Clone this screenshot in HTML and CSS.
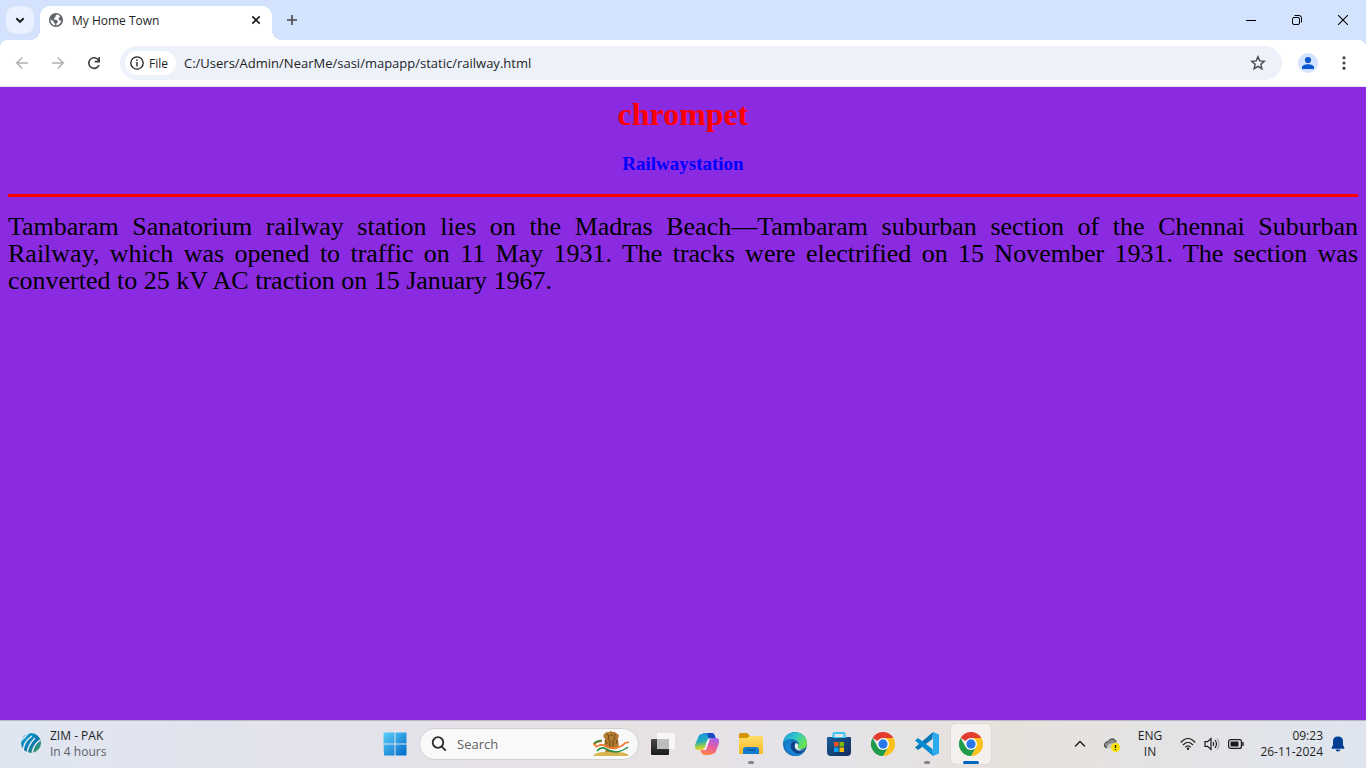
FILE: index.html
```html
<!DOCTYPE html>
<html lang="en">
<head>
<meta charset="utf-8">
<title>My Home Town</title>
<link rel="stylesheet" href="styles.css">
</head>
<body>
<header class="tabstrip">
  <button class="tab-search" aria-label="Search tabs"><svg width="12" height="12" viewBox="0 0 12 12"><path d="M2.3 4.2 6 7.8l3.700-3.600" fill="none" stroke="#1f1f1f" stroke-width="1.900"/></svg></button>
  <div class="tab">
    <svg width="14" height="14" viewBox="0 0 14 14"><circle cx="7" cy="7" r="7" fill="#5f6368"/><path d="M8.500 1.600C6.800 2.200 6.200 3 6.500 4.200L4.800 5.200 5.200 6.600 8.300 7.200 8.900 9 7.600 10.300 7.200 12.500C9.800 12.300 12 10.200 12.400 8L10.500 7.200 9.300 5.600 10.600 4.600 11 3.100C10.300 2.300 9.300 1.800 8.500 1.600ZM1.600 6.300 4.600 8.300 5 10 6.200 10.800 6.100 12.500C3.300 12.200 1.300 9.700 1.600 6.300Z" fill="#fff"/></svg>
    <span class="tab-title">My Home Town</span>
    <button class="tab-close" aria-label="Close tab"><svg width="10" height="10" viewBox="0 0 10 10"><path d="m1.300 1.300 7.400 7.400m0-7.400L1.300 8.700" stroke="#1f1f1f" stroke-width="1.700"/></svg></button>
  </div>
  <button class="new-tab" aria-label="New tab"><svg width="12" height="12" viewBox="0 0 12 12"><path d="M6 1v10M1 6h10" stroke="#474747" stroke-width="1.600"/></svg></button>
  <div class="window-controls">
    <button aria-label="Minimize"><svg width="10" height="10" viewBox="0 0 10 10"><path d="M0 5.500h10" stroke="#000"/></svg></button>
    <button aria-label="Restore"><svg width="10" height="10" viewBox="0 0 10 10" fill="none" stroke="#000"><rect x=".5" y="2.500" width="7" height="7" rx="1.500"/><path d="M2.500.5H7A2.500 2.500 0 0 1 9.500 3v4.500"/></svg></button>
    <button aria-label="Close"><svg width="10" height="10" viewBox="0 0 10 10"><path d="m0 0 10 10m0-10L0 10" stroke="#000" stroke-width="1.100"/></svg></button>
  </div>
</header>
<nav class="toolbar">
  <button class="tool" aria-label="Back" disabled><svg width="14" height="14" viewBox="0 0 14 14" fill="none" stroke="#b0b0b0" stroke-width="1.500"><path d="M13 7H2M7.200 1.500 1.700 7l5.500 5.500"/></svg></button>
  <button class="tool" aria-label="Forward" disabled><svg width="14" height="14" viewBox="0 0 14 14" fill="none" stroke="#b0b0b0" stroke-width="1.500"><path d="M1 7h11M6.800 1.500 12.300 7l-5.500 5.500"/></svg></button>
  <button class="tool" aria-label="Reload"><svg width="14" height="14" viewBox="0 0 14 14" fill="none" stroke="#3c3c3c" stroke-width="1.600"><path d="M12 9A5.300 5.300 0 1 1 11.600 4.300l.6.900M12.200 1v4.600H7.700"/></svg></button>
  <div class="omnibox">
    <button class="file-chip"><svg width="14" height="14" viewBox="0 0 14 14"><circle cx="7" cy="7" r="6.200" fill="none" stroke="#1f1f1f" stroke-width="1.300"/><path d="M7 6v4.500M7 3.500v1.400" stroke="#1f1f1f" stroke-width="1.400"/></svg>File</button>
    <input class="url" type="text" aria-label="Address" value="C:/Users/Admin/NearMe/sasi/mapapp/static/railway.html">
    <button class="star" aria-label="Bookmark"><svg width="16" height="16" viewBox="0 0 16 16"><path d="m8 1.700 1.800 4.200 4.600.4-3.500 3 1 4.500L8 11.400l-3.900 2.400 1-4.500-3.500-3 4.600-.4Z" fill="none" stroke="#474747" stroke-width="1.400"/></svg></button>
  </div>
  <button class="tool profile" aria-label="Profile"><svg width="20" height="20" viewBox="0 0 20 20"><circle cx="10" cy="10" r="10" fill="#d3e3fd"/><circle cx="10" cy="7" r="3.100" fill="#0b57d0"/><path d="M4 16v-1.500C4 12.400 7 11.300 10 11.300s6 1.100 6 3.200V16Z" fill="#0b57d0"/></svg></button>
  <button class="tool menu" aria-label="Menu"><svg width="4" height="16" viewBox="0 0 4 16" fill="#474747"><circle cx="2" cy="2.800" r="1.600"/><circle cx="2" cy="8" r="1.600"/><circle cx="2" cy="13.200" r="1.600"/></svg></button>
</nav>
<main class="page">
  <h1>chrompet</h1>
  <h3>Railwaystation</h3>
  <hr>
  <p>Tambaram Sanatorium railway station lies on the Madras Beach—Tambaram suburban section of the Chennai Suburban Railway,&nbsp;which was opened to traffic on 11 May 1931. The tracks were electrified on 15 November 1931. The section was converted&nbsp;to 25 kV AC traction on 15 January 1967.</p>
</main>
<svg class="defs" width="0" height="0" aria-hidden="true">
  <defs>
    <linearGradient id="win" x2="1" y2="1"><stop stop-color="#5ad2fb"/><stop offset="1" stop-color="#0067c8"/></linearGradient>
    <linearGradient id="globe" x2="1" y2="1"><stop stop-color="#18a9d5"/><stop offset=".55" stop-color="#0878b1"/><stop offset="1" stop-color="#56a944"/></linearGradient>
    <linearGradient id="copA" x1=".2" x2=".4" y2="1"><stop stop-color="#188fe8"/><stop offset=".5" stop-color="#25b0b8"/><stop offset=".8" stop-color="#a9cf3d"/><stop offset="1" stop-color="#ffd02b"/></linearGradient>
    <linearGradient id="copB" x1=".6" x2=".3" y2="1"><stop stop-color="#a861e8"/><stop offset=".5" stop-color="#e85b9e"/><stop offset="1" stop-color="#ff8743"/></linearGradient>
    <linearGradient id="fold" x2="0" y2="1"><stop stop-color="#ffdc67"/><stop offset="1" stop-color="#f7b927"/></linearGradient>
    <linearGradient id="edgeA" x1="0" x2="1" y2=".5"><stop stop-color="#189edb"/><stop offset=".5" stop-color="#32c5cc"/><stop offset="1" stop-color="#67e34f"/></linearGradient>
    <linearGradient id="edgeB" x2="1" y2="1"><stop stop-color="#148bd5"/><stop offset="1" stop-color="#104b8f"/></linearGradient>
    <linearGradient id="store" x2="1" y2="1"><stop stop-color="#175d99"/><stop offset="1" stop-color="#132c5c"/></linearGradient>
    <linearGradient id="dark" x2="0" y2="1"><stop stop-color="#464646"/><stop offset="1" stop-color="#1b1b1b"/></linearGradient>
    <symbol id="chrome" viewBox="0 0 48 48">
      <path d="M24 24 3.200 12A24 24 0 0 1 44.800 12L24 13Z" fill="#e33b2e"/>
      <path d="M24 12h20.800A24 24 0 0 1 24 48l10.400-18Z" fill="#fcc21b"/>
      <path d="M13.600 30 3.200 12A24 24 0 0 0 24 48l10.400-18Z" fill="#219a4b"/>
      <circle cx="24" cy="24" r="12" fill="#fff"/><circle cx="24" cy="24" r="9.300" fill="#2878ec"/>
    </symbol>
  </defs>
</svg>
<footer class="taskbar">
  <button class="widget">
    <svg width="22" height="24" viewBox="0 0 22 24"><circle cx="11" cy="11" r="10" fill="url(#globe)"/><path d="M-1 10Q5 6 10-1M3 20Q3 10 12 4M7 23Q7 14 15 6M12 24Q12 14 20 8" fill="none" stroke="#e5ebf3" stroke-width="1.500"/></svg>
    <span class="widget-text"><span>ZIM - PAK</span><span class="sub">In 4 hours</span></span>
  </button>
  <div class="apps">
    <button class="app" aria-label="Start"><svg width="24" height="24" viewBox="0 0 24 24"><path d="M1 .5h10.500v11H.5V1ZM12.500.5h11v11h-11ZM.5 12.500h11v11H1ZM12.500 12.500h11v11h-11Z" fill="url(#win)"/></svg></button>
    <label class="search">
      <svg width="16" height="16" viewBox="0 0 16 16" fill="none" stroke="#2b2b2b" stroke-width="1.800"><circle cx="7" cy="6.500" r="5.300"/><path d="m10.700 10.500 4 4.200"/></svg>
      <input type="text" placeholder="Search" aria-label="Search">
      <svg width="38" height="26" viewBox="0 0 38 26"><path d="M1 25q2-4 12-4h12q10 0 12 4Z" fill="#d9b452"/><path d="M13 21h12v-3l2-2-1-8 1-4-3-2-1-1h-2l-2-1-2 1h-2l-2 1-2 3 2 3-1 8 2 2Z" fill="#b17c30"/><path d="M15 3l2 2-1 3 2 2v8M24 3l-2 2 1 3-2 2v8M18 4h3M13 9l2 4M25 9l-1 4" fill="none" stroke="#704719" stroke-width="1"/><path d="M5 16l-3-3q3-3 8-3M5 16q4-4 8-1t10 2q7-1 10-5l4-1" fill="none" stroke="#f27a2c" stroke-width="1.800"/><path d="M5 17.500q4-3 8-.5t11 2q7-1 11-5" fill="none" stroke="#fff" stroke-width="1.800"/><path d="M5 20q4-5 9-2t10 3q7-1 12-5M2 12.500q3-3 8-3" fill="none" stroke="#278b42" stroke-width="1.600"/></svg>
    </label>
    <button class="app" aria-label="Task view"><svg width="24" height="24" viewBox="0 0 24 24"><rect y="7" width="18" height="16" rx="1" fill="url(#dark)"/><rect x="6" y="1" width="18" height="16" rx="1" fill="#f7f7f7"/><path d="M6 7h12v10H6Z" fill="#bdbdbd"/></svg></button>
    <button class="app" aria-label="Copilot"><svg width="24" height="24" viewBox="0 0 24 24"><path d="M7 2Q8 1 10 1h7q2 0 3 3l.5 2H16q-3 0-4 3l-2 6q-1 3-4 3H3q-4 0-3-5L3 6Q4 2 7 2Z" fill="url(#copA)"/><path d="M12 1h5q2 0 3 3l.5 2H17q-2 0-3 2Z" fill="#1b4ac0"/><path d="M17 22q-1 1-3 1H9q-2 0-3-3l-.5-2H8q3 0 4-3l2-6q1-3 4-3h3q4 0 3 5l-3 8q-1 3-4 3Z" fill="url(#copB)"/><path d="m11 12 1-3q1-3 3-3l-4 12H8q2 0 3-3Z" fill="#f4efff"/></svg></button>
    <button class="app running" aria-label="File Explorer"><svg width="24" height="24" viewBox="0 0 24 24"><path d="M0 3q0-2 2-2h6l3 3v4H0Z" fill="#d29500"/><path d="M0 6h8l3-2h12q1 0 1 1v17H0Z" fill="url(#fold)"/><path d="M4 22v-4q0-3 3-3h10q3 0 3 3v4Z" fill="#127bd0"/><path d="M8 18h8" stroke="#075796" stroke-width="1.500"/></svg></button>
    <button class="app" aria-label="Edge"><svg width="24" height="24" viewBox="0 0 24 24"><circle cx="12" cy="12" r="12" fill="url(#edgeB)"/><path d="M.5 9C3-3 23-3 24 11q0 6-6 6-5 0-3-3 2-3-1-5Q9 5 .5 9Z" fill="url(#edgeA)"/><path d="M9 9q-3 5 1 9t12 1q-5 7-13 4T3 11q2-3 6-2Z" fill="#1583cf"/><path d="M9 10q-3 6 2 10t10-1q-7 2-9-2-2-4 1-7Z" fill="#143f87"/><path d="M13 11q-2 2-1 4.500 2 4.500 9.500 2-3 .5-5.500-.5-2-1-1-3 1-2-2-3Z" fill="#ece9ed"/></svg></button>
    <button class="app" aria-label="Microsoft Store"><svg width="24" height="24" viewBox="0 0 24 24"><path d="M6.500 6V2q0-1 1-1h9q1 0 1 1v4" fill="none" stroke="#3bc4ef" stroke-width="2"/><path d="M1 5h22q1 0 1 1v14q0 4-4 4H4q-4 0-4-4V6q0-1 1-1Z" fill="url(#store)"/><path d="M6 5h13v1H6Z" fill="#3bc4ef"/><path d="M7 10h4.500v4.500H7Z" fill="#f25022"/><path d="M12.500 10H17v4.500h-4.500Z" fill="#7fba00"/><path d="M7 15.500h4.500V20H7Z" fill="#00a4ef"/><path d="M12.500 15.500H17V20h-4.500Z" fill="#ffb900"/></svg></button>
    <button class="app" aria-label="Chrome"><svg width="24" height="24"><use href="#chrome"/></svg></button>
    <button class="app running" aria-label="Visual Studio Code"><svg width="24" height="24" viewBox="0 0 24 24"><path d="m18 0-.5 7L3 18 0 15.500Z" fill="#0877b9"/><path d="m18 24-.5-7L3 6 0 8.500Z" fill="#058bd2"/><path d="m18 0 6 2.500v19L18 24Z" fill="#2aabf0"/></svg></button>
    <button class="app active" aria-label="Chrome, My Home Town"><svg width="24" height="24"><use href="#chrome"/></svg></button>
  </div>
  <div class="tray">
    <button class="tray-button" aria-label="Show hidden icons"><svg width="12" height="8" viewBox="0 0 12 8"><path d="m1 6.500 5-5 5 5" fill="none" stroke="#1b1b1b" stroke-width="1.400"/></svg></button>
    <button class="tray-button" aria-label="OneDrive"><svg width="18" height="16" viewBox="0 0 18 16"><path d="M4 12Q1 11.500 1.500 8.500 2 6 5 5.500 7 2 10.500 3q2.500 1 3 4v4q-1 1-3 1Z" fill="#8b8b8b"/><path d="M4 12q0-4 4-4.500l5-1V12Z" fill="#c8c8c8"/><path d="M4 12Q1 11.500 1.500 8.500 2 6 5 5.500 7 2 10.500 3q2 .8 2.700 3" fill="none" stroke="#333"/><circle cx="12.500" cy="11.500" r="4.500" fill="#ffe100"/><path d="M12.500 9v3M12.500 13v1" stroke="#222" stroke-width="1.300"/></svg></button>
    <button class="language"><span>ENG</span><span>IN</span></button>
    <button class="status" aria-label="Network, volume and battery">
      <svg width="16" height="14" viewBox="0 0 16 14" fill="none" stroke="#1b1b1b" stroke-width="1.200"><path d="M.8 5.500q7.200-8 14.400 0M3 8q5-5.500 10 0M5.200 10.300q2.800-3 5.600 0"/><circle cx="8" cy="11.800" r="1.200" fill="#1b1b1b" stroke="none"/></svg>
      <svg width="16" height="14" viewBox="0 0 16 14" fill="none" stroke="#1b1b1b" stroke-width="1.200"><path d="M1 4.700h2.500L7 1.500v11L3.500 9.300H1ZM9 5q1.500 2 0 4M11 3q3 4 0 8"/><path d="M13 1q4 6 0 12" stroke="#aaa"/></svg>
      <svg width="16" height="12" viewBox="0 0 16 12"><rect x=".6" y="1.600" width="12.800" height="8.800" rx="2" fill="none" stroke="#1b1b1b" stroke-width="1.200"/><rect x="2.500" y="3.500" width="8" height="5" fill="#1b1b1b"/><path d="M15 4v4" stroke="#1b1b1b" stroke-width="1.400"/></svg>
    </button>
    <button class="clock"><span>09:23</span><span>26-11-2024</span></button>
    <button class="bell" aria-label="Notifications"><svg width="14" height="16" viewBox="0 0 14 16" fill="#003e92"><path d="M7 .5q5 0 5 5V9l1.500 3q0 .7-.7.700H1.200q-.7 0-.7-.7L2 9V5.500q0-5 5-5ZM4.500 13.500h5Q9 15.500 7 15.500t-2.500-2Z"/></svg></button>
  </div>
</footer>
</body>
</html>
```

FILE: styles.css
```css
* { box-sizing: border-box; }

body {
  display: flex;
  flex-direction: column;
  min-height: 100vh;
  margin: 0;
  background: #8a2be2;
  font-family: "Open Sans", "Noto Sans", sans-serif;
  font-size: 12px;
  color: #1f1f1f;
}

button {
  display: flex;
  align-items: center;
  justify-content: center;
  padding: 0;
  border: 0;
  background: none;
  font: inherit;
  color: inherit;
}

svg { display: block; flex: none; }
.defs { position: absolute; }

.tabstrip {
  display: flex;
  align-items: flex-end;
  height: 40px;
  padding-left: 6px;
  background: #d3e3fd;
}
.tab-search {
  width: 28px;
  height: 28px;
  margin: 0 6px 6px 0;
  border-radius: 10px;
  background: #e9f0fe;
}
.tab {
  position: relative;
  display: flex;
  align-items: center;
  gap: 9px;
  width: 232px;
  height: 34px;
  padding: 0 6px 6px 9px;
  border-radius: 10px 10px 0 0;
  background: #fff;
}
.tab::before,
.tab::after {
  content: "";
  position: absolute;
  bottom: 0;
  width: 10px;
  height: 10px;
}
.tab::before { right: 100%; background: radial-gradient(circle at 0 0, transparent 10px, #fff 10px); }
.tab::after { left: 100%; background: radial-gradient(circle at 100% 0, transparent 10px, #fff 10px); }
.tab-title { flex: 1; }
.tab-close { width: 20px; height: 20px; }
.new-tab { width: 28px; height: 28px; margin: 0 0 6px 6px; }
.window-controls { display: flex; align-self: stretch; margin-left: auto; }
.window-controls button { width: 46px; height: 40px; }

.toolbar {
  display: flex;
  align-items: center;
  gap: 8px;
  height: 47px;
  padding: 0 8px;
  border-bottom: 1px solid #dce3ea;
  background:
    radial-gradient(circle at 8px 8px, #fff 8px, #d3e3fd 8px) 0 0 / 8px 8px no-repeat,
    radial-gradient(circle at 0 8px, #fff 8px, #d3e3fd 8px) 100% 0 / 8px 8px no-repeat,
    #fff;
}
.tool { width: 28px; height: 28px; }
.omnibox {
  display: flex;
  flex: 1;
  align-items: center;
  height: 34px;
  margin: 0 4px;
  padding: 0 14px 0 5px;
  border-radius: 17px;
  background: #ecf1fa;
}
.file-chip {
  gap: 5px;
  height: 24px;
  padding: 0 8px 0 5px;
  border-radius: 12px;
  background: #fff;
  font-weight: 500;
}
.url {
  flex: 1;
  min-width: 0;
  padding: 0 8px;
  border: 0;
  outline: 0;
  background: none;
  font: inherit;
  font-size: 13px;
  color: inherit;
}
.star { width: 20px; height: 20px; }

.page {
  flex: 1;
  padding: 9px 8px 8px;
  font-family: "Liberation Serif", serif;
  color: #000;
}
.page h1 {
  margin: 0 0 20px;
  font-size: 32px;
  line-height: 37px;
  text-align: center;
  color: #f00;
}
.page h3 {
  margin: 0 0 19px;
  font-size: 19px;
  line-height: 22px;
  text-align: center;
  color: #00f;
}
.page hr { height: 3px; margin: 0 0 16px; border: 0; background: #f00; }
.page p {
  margin: 0;
  font-family: Georgia, "Liberation Serif", serif;
  font-size: 26px;
  line-height: 27px;
  text-align: justify;
}

.taskbar {
  display: grid;
  grid-template-columns: 1fr auto 1fr;
  align-items: center;
  height: 48px;
  padding-bottom: 1px;
  border-top: 1px solid #bcb5c7;
  background: linear-gradient(90deg, #dfe6f1, #e5e2e9 32%, #e8e1e4 46%, #e3e3e8 60%, #e7e1dc 74%, #dfe5ef);
}
.widget { justify-self: start; gap: 8px; margin-left: 20px; text-align: left; }
.widget-text, .language, .clock { display: flex; flex-direction: column; line-height: 16px; }
.sub { color: #5d6066; }

.apps { display: flex; align-items: center; gap: 4px; }
.app { position: relative; width: 40px; height: 40px; border-radius: 4px; }
.running::after, .active::after {
  content: "";
  position: absolute;
  bottom: 0;
  left: calc(50% - 3px);
  width: 6px;
  height: 3px;
  border-radius: 2px;
  background: #858585;
}
.active { background: #f3f0ed; box-shadow: 0 0 1px #aaa; }
.active::after { left: calc(50% - 8px); width: 16px; background: #0067c0; }
.search {
  display: flex;
  align-items: center;
  gap: 10px;
  width: 220px;
  height: 32px;
  padding: 0 8px 0 11px;
  border: 1px solid #d2d0d5;
  border-radius: 16px;
  background: #faf9fa;
}
.search input {
  flex: 1;
  min-width: 0;
  padding: 0;
  border: 0;
  outline: 0;
  background: none;
  font: inherit;
  font-size: 13px;
}
.search input::placeholder { color: #606060; opacity: 1; }

.tray { display: flex; align-items: center; justify-content: flex-end; padding-right: 21px; }
.tray-button { width: 32px; height: 40px; }
.language { width: 44px; margin-right: 8px; }
.status { gap: 8px; }
.clock { align-items: flex-end; width: 79px; }
.bell { width: 14px; margin-left: 8px; }
```
